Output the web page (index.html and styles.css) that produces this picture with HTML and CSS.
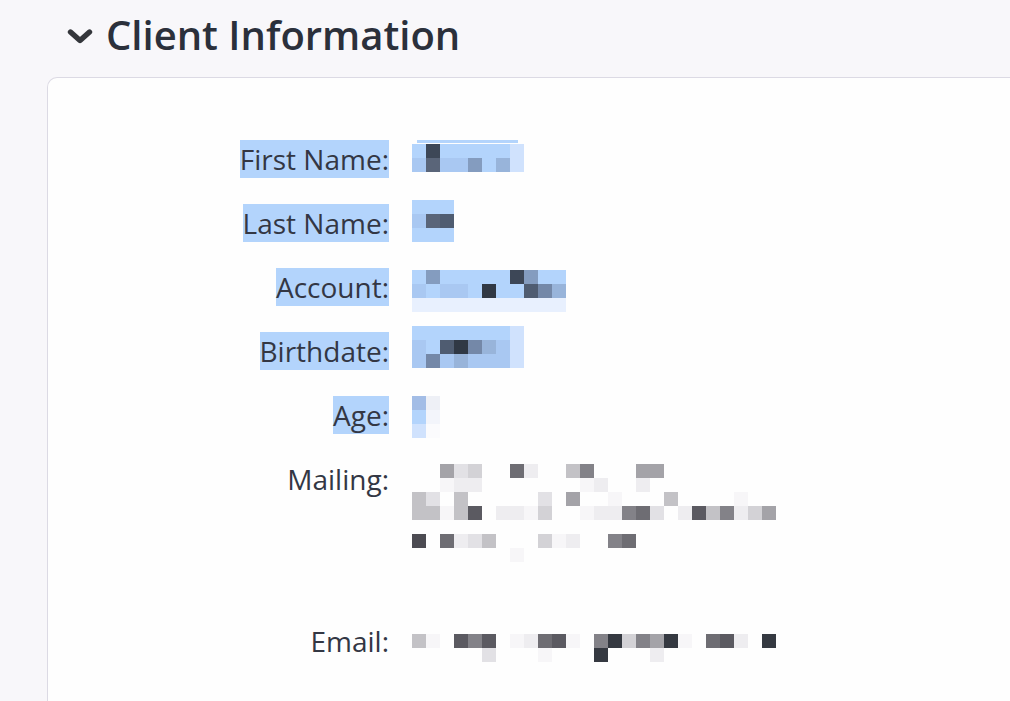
FILE: index.html
```html
<!DOCTYPE html>
<html lang="en">
<head>
<meta charset="utf-8">
<title>Client Information</title>
<link rel="stylesheet" href="styles.css">
</head>
<body>
<div class="page">
  <header class="section-head">
    <svg class="chev" width="26" height="17" viewBox="0 0 26 17" aria-hidden="true">
      <path d="M3.5 4 L13 12.5 L22.5 4" fill="none" stroke="#34363b" stroke-width="5.4" stroke-linecap="round" stroke-linejoin="round"/>
    </svg>
    <h1 class="title">Client Information</h1>
  </header>

  <section class="card">
    <div class="row">
      <div class="label"><span class="sel">First Name:</span></div>
      <div class="value off-first">
        <div class="selbar"></div>
        <div class="m"><i class="b0"></i><i class="b7"></i><i class="b0"></i><i class="b0"></i><i class="b0"></i><i class="b0"></i><i class="b0"></i><i class="bp"></i></div>
        <div class="m"><i class="b1"></i><i class="b5"></i><i class="b1"></i><i class="b1"></i><i class="b3"></i><i class="b0"></i><i class="b2"></i><i class="bp"></i></div>
      </div>
    </div>

    <div class="row">
      <div class="label"><span class="sel">Last Name:</span></div>
      <div class="value off-last">
        <div class="m"><i class="b0"></i><i class="b0"></i><i class="b0"></i></div>
        <div class="m"><i class="b1"></i><i class="b5"></i><i class="b6"></i></div>
        <div class="m"><i class="b0"></i><i class="b0"></i><i class="b0"></i></div>
      </div>
    </div>

    <div class="row">
      <div class="label"><span class="sel">Account:</span></div>
      <div class="value off-account">
        <div class="m"><i class="b0"></i><i class="b3"></i><i class="b0"></i><i class="b0"></i><i class="b0"></i><i class="b0"></i><i class="b0"></i><i class="b7"></i><i class="b3"></i><i class="b0"></i><i class="b0"></i></div>
        <div class="m"><i class="b1"></i><i class="b0"></i><i class="b1"></i><i class="b1"></i><i class="b0"></i><i class="b8"></i><i class="b0"></i><i class="b0"></i><i class="b6"></i><i class="b4"></i><i class="b2"></i></div>
        <div class="m"><i class="bq"></i><i class="bq"></i><i class="bq"></i><i class="bq"></i><i class="bq"></i><i class="bq"></i><i class="bq"></i><i class="bq"></i><i class="bq"></i><i class="bq"></i><i class="bq"></i></div>
      </div>
    </div>

    <div class="row">
      <div class="label"><span class="sel">Birthdate:</span></div>
      <div class="value off-birth">
        <div class="m"><i class="b0"></i><i class="b0"></i><i class="b0"></i><i class="b0"></i><i class="b0"></i><i class="b0"></i><i class="b0"></i><i class="bp"></i></div>
        <div class="m"><i class="b1"></i><i class="b0"></i><i class="b6"></i><i class="b8"></i><i class="b4"></i><i class="b2"></i><i class="b1"></i><i class="bp"></i></div>
        <div class="m"><i class="b1"></i><i class="b4"></i><i class="b1"></i><i class="b2"></i><i class="b1"></i><i class="b1"></i><i class="b1"></i><i class="bp"></i></div>
      </div>
    </div>

    <div class="row">
      <div class="label"><span class="sel">Age:</span></div>
      <div class="value off-age">
        <div class="m"><i class="ba"></i><i class="ga"></i></div>
        <div class="m"><i class="b0"></i><i class="gb"></i></div>
        <div class="m"><i class="bp"></i><i class="gc"></i></div>
      </div>
    </div>

    <div class="row tall">
      <div class="label">Mailing:</div>
      <div class="value off-mail">
        <div class="m"><i></i><i></i><i class="g5"></i><i class="g2"></i><i class="g3"></i><i></i><i></i><i class="g7"></i><i class="g1"></i><i></i><i></i><i class="g4"></i><i class="g6"></i><i></i><i></i><i></i><i class="g5"></i><i class="g5"></i></div>
        <div class="m"><i></i><i></i><i class="g0"></i><i class="g1"></i><i class="g1"></i><i></i><i></i><i></i><i></i><i></i><i></i><i></i><i class="g0"></i><i class="g1"></i><i></i><i></i><i class="g1"></i></div>
        <div class="m"><i class="g4"></i><i class="g2"></i><i></i><i class="g4"></i><i></i><i></i><i></i><i></i><i></i><i class="g2"></i><i></i><i class="g5"></i><i></i><i></i><i class="g0"></i><i></i><i></i><i></i><i class="g4"></i><i></i><i></i><i></i><i></i><i class="g0"></i></div>
        <div class="m"><i class="g4"></i><i class="g4"></i><i class="g0"></i><i class="g4"></i><i class="g8"></i><i></i><i class="g1"></i><i class="g1"></i><i class="g0"></i><i class="g3"></i><i></i><i></i><i class="g0"></i><i class="g1"></i><i class="g1"></i><i class="g6"></i><i class="g7"></i><i class="g2"></i><i></i><i class="g1"></i><i class="g8"></i><i class="g4"></i><i class="g6"></i><i class="g1"></i><i class="g3"></i><i class="g5"></i></div>
        <div class="m"></div>
        <div class="m"><i class="gd"></i><i></i><i class="g7"></i><i class="g1"></i><i class="g2"></i><i class="g4"></i><i></i><i></i><i></i><i class="g3"></i><i class="g0"></i><i class="g1"></i><i></i><i></i><i class="g6"></i><i class="g7"></i></div>
        <div class="m"><i></i><i></i><i></i><i></i><i></i><i></i><i></i><i class="g0"></i></div>
      </div>
    </div>

    <div class="row">
      <div class="label">Email:</div>
      <div class="value off-email">
        <div class="m"><i class="g4"></i><i class="g0"></i><i></i><i class="g8"></i><i class="g6"></i><i class="g8"></i><i></i><i class="g0"></i><i class="g1"></i><i class="g7"></i><i class="g8"></i><i class="g0"></i><i></i><i class="g6"></i><i class="g9"></i><i class="g3"></i><i class="g6"></i><i class="g5"></i><i class="g9"></i><i class="g0"></i><i></i><i class="g7"></i><i class="g8"></i><i class="g1"></i><i></i><i class="g9"></i></div>
        <div class="m"><i></i><i></i><i></i><i></i><i></i><i class="g2"></i><i></i><i></i><i></i><i class="g0"></i><i></i><i></i><i></i><i class="g9"></i><i></i><i></i><i></i><i class="g1"></i></div>
      </div>
    </div>
  </section>
</div>
</body>
</html>
```

FILE: styles.css
```css
html, body {
  margin: 0;
  padding: 0;
  background: #f8f7fa;
  height: 100%;
  overflow: hidden;
}

.page {
  font-family: "Open Sans", "Noto Sans", "Liberation Sans", sans-serif;
  color: #2f3440;
}

.section-head {
  display: flex;
  align-items: center;
  gap: 13px;
  padding: 8px 0 0 67px;
  margin-bottom: 15px;
}

.chev {
  display: block;
  flex: none;
  margin-top: 2px;
}

.title {
  margin: 0;
  font-size: 40px;
  line-height: 54px;
  font-weight: 600;
  color: #2b303b;
  letter-spacing: 0;
}

.card {
  margin-left: 47px;
  margin-right: -20px;
  height: 640px;
  background: #fefefe;
  border: 1px solid #dcdae4;
  border-bottom: 0;
  border-radius: 10px 10px 0 0;
  padding-top: 49px;
  box-sizing: border-box;
}

.row {
  display: grid;
  grid-template-columns: 341px auto;
  column-gap: 23px;
  align-items: start;
  height: 64px;
}

.row.tall {
  height: 162px;
}

.label {
  text-align: right;
  font-size: 28px;
  line-height: 64px;
  color: #333744;
  white-space: nowrap;
}

.sel {
  background: #b3d4fc;
}

.value {
  display: flex;
  flex-direction: column;
}

.off-first { margin-top: 13px; }
.off-last { margin-top: 9px; }
.off-account { margin-top: 15px; }
.off-birth { margin-top: 7px; }
.off-age { margin-top: 13px; }
.off-mail { margin-top: 17px; }
.off-email { margin-top: 25px; }

.selbar {
  width: 101px;
  height: 3px;
  margin: 0 0 1px 5px;
  background: #b3d4fc;
}

.m {
  display: flex;
  height: 14px;
}

.m i {
  display: block;
  flex: none;
  width: 14px;
  height: 14px;
}

/* blue (selected) tones */
.b0 { background: #b3d4fc; }
.b1 { background: #a9c8f2; }
.b2 { background: #98b4da; }
.b3 { background: #849cbf; }
.b4 { background: #7488a8; }
.b5 { background: #5a6579; }
.b6 { background: #4f5c71; }
.b7 { background: #3d4757; }
.b8 { background: #303844; }
.bp { background: #d0e2fd; }
.bq { background: #e8f0fe; }
.ba { background: #a3bde6; }

/* grey tones */
.ga { background: #eef0f6; }
.gb { background: #f3f5fb; }
.gc { background: #fbfbfd; }
.g0 { background: #f7f6f8; }
.g1 { background: #eeedf0; }
.g2 { background: #e2e1e5; }
.g3 { background: #d3d2d6; }
.g4 { background: #c3c2c6; }
.g5 { background: #a4a3a8; }
.g6 { background: #838288; }
.g7 { background: #6e6d73; }
.g8 { background: #5b5a61; }
.gd { background: #4c4b52; }
.g9 { background: #353941; }
```
